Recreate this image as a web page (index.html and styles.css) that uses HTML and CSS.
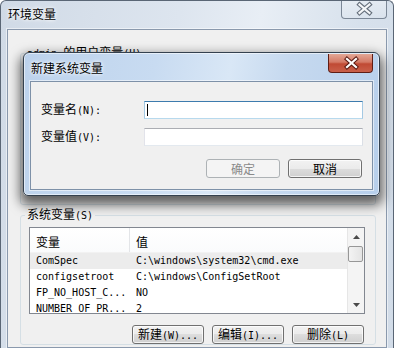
FILE: index.html
```html
<!DOCTYPE html>
<html>
<head>
	<meta charset="utf-8">
	<title>环境变量</title>
	<link rel="stylesheet" href="styles.css">
</head>
<body>
<div class="window">
	<div class="titlebar">
		<span class="title">环境变量</span>
		<span class="close close-idle">
			<svg width="44" height="18" viewBox="0 0 44 18">
				<path d="M17.5 4.5 L27.5 13 M27.5 4.5 L17.5 13" stroke="#66707c" stroke-width="4.4" stroke-linecap="square" fill="none"/>
				<path d="M17.5 4.5 L27.5 13 M27.5 4.5 L17.5 13" stroke="#f4f6f8" stroke-width="2.2" stroke-linecap="square" fill="none"/>
			</svg>
		</span>
	</div>
	<div class="client">
		<!-- user variables: covered by the dialog -->
		<fieldset class="group group-user">
			<legend><span class="hw">admin </span>的用户变量<span class="hw">(U)</span></legend>
			<div class="listbox listbox-empty"></div>
			<div class="btnrow btnrow-empty"></div>
		</fieldset>
		<fieldset class="group group-sys">
			<legend>系统变量<span class="hw">(S)</span></legend>
			<div class="listbox">
				<div class="list-main">
					<div class="list-head"><span class="col-name">变量</span><span class="col-val">值</span></div>
					<div class="row row-sel"><span class="col-name">ComSpec</span><span class="col-val">C:\windows\system32\cmd.exe</span></div>
					<div class="row"><span class="col-name">configsetroot</span><span class="col-val">C:\windows\ConfigSetRoot</span></div>
					<div class="row"><span class="col-name">FP_NO_HOST_C...</span><span class="col-val">NO</span></div>
					<div class="row"><span class="col-name">NUMBER_OF_PR...</span><span class="col-val">2</span></div>
				</div>
				<div class="vscroll">
					<span class="sb-btn"><svg width="7" height="4" viewBox="0 0 7 4"><polygon points="0,4 3.5,0 7,4" fill="#4a4a4a"/></svg></span>
					<span class="sb-thumb"></span>
					<span class="sb-track"></span>
					<span class="sb-btn"><svg width="7" height="4" viewBox="0 0 7 4"><polygon points="0,0 7,0 3.5,4" fill="#4a4a4a"/></svg></span>
				</div>
			</div>
			<div class="btnrow">
				<button class="btn">新建<span class="hw">(W)...</span></button>
				<button class="btn">编辑<span class="hw">(I)...</span></button>
				<button class="btn">删除<span class="hw">(L)</span></button>
			</div>
		</fieldset>
	</div>

	<div class="dialog">
		<div class="dlg-titlebar">
			<span class="dlg-title">新建系统变量</span>
			<span class="close close-red">
				<svg width="45" height="19" viewBox="0 0 45 19">
					<path d="M18 5 L27 13 M27 5 L18 13" stroke="#5a1a12" stroke-width="4.2" stroke-linecap="square" fill="none"/>
					<path d="M18 5 L27 13 M27 5 L18 13" stroke="#ffffff" stroke-width="2.2" stroke-linecap="square" fill="none"/>
				</svg>
			</span>
		</div>
		<div class="dlg-client">
			<div class="form">
				<label>变量名<span class="hw">(N):</span></label>
				<div class="field field-focus"><span class="caret"></span></div>
				<label>变量值<span class="hw">(V):</span></label>
				<div class="field"></div>
			</div>
			<div class="dlg-buttons">
				<button class="btn btn-off">确定</button>
				<button class="btn btn-wide">取消</button>
			</div>
		</div>
	</div>
</div>
</body>
</html>
```

FILE: styles.css
```css
html, body{
	margin: 0;
}
body{
	font-family: "Noto Sans CJK SC", sans-serif;
	font-size: 12px;
	line-height: 16px;
	color: #000;
	background: #fff;
}
.hw{
	font-family: "DejaVu Sans Mono", monospace;
	font-size: 10px;
}

/* outer window */
.window{
	position: relative;
	width: 394px;
	height: 348px;
	box-sizing: border-box;
	border: 1px solid #5a6675;
	border-bottom: none;
	border-radius: 6px 6px 0 0;
	background: linear-gradient(100deg, #d0dae6 0%, #dde5ef 40%, #e8eef5 58%, #d7e1ec 80%, #d2dce8 100%);
	display: flex;
	flex-direction: column;
	overflow: hidden;
}
.titlebar{
	height: 28px;
	display: flex;
	justify-content: space-between;
	align-items: flex-start;
	padding-left: 7px;
}
.title{
	margin-top: 5px;
	text-shadow: 0 0 5px #fff, 0 0 3px #fff;
}
.close{
	display: block;
	box-sizing: border-box;
	border-radius: 0 0 4px 4px;
}
.close svg{
	display: block;
}
.close-idle{
	width: 46px;
	height: 19px;
	margin-top: -1px;
	margin-right: 6px;
	border: 1px solid #7b8796;
	border-top: none;
	background: linear-gradient(rgba(255,255,255,0.35), rgba(255,255,255,0.1));
}
.client{
	flex: 1;
	margin: 0 6px;
	border: 1px solid #8a99ad;
	box-shadow: 0 0 0 1px rgba(255,255,255,0.5);
	background: #f0f0f0;
}

/* group boxes */
.group{
	margin: 0 10px 0 12px;
	padding: 0;
	border: 1px solid #d5dfe5;
	border-radius: 3px;
	min-width: 0;
}
.group legend{
	margin-left: 4px;
	padding: 0 2px;
	line-height: 16px;
}
.group-user{
	margin-top: 14px;
	padding-bottom: 22px;
}
.group-sys{
	margin-top: 1px;
}

.listbox{
	display: flex;
	height: 87px;
	box-sizing: border-box;
	margin: 3px 10px 0 8px;
	border: 1px solid #828790;
	background: #fff;
	overflow: hidden;
}
.list-main{
	flex: 1;
	min-width: 0;
}
.list-head, .row{
	display: grid;
	grid-template-columns: 100px 1fr;
	white-space: nowrap;
}
.list-head{
	height: 25px;
	box-sizing: border-box;
	padding-top: 6px;
	border-bottom: 1px solid #f2f2f2;
	background: linear-gradient(#ffffff, #fafbfc);
}
.list-head .col-name{
	border-right: 1px solid #e3e5e8;
	margin-top: -6px;
	padding-top: 6px;
	height: 24px;
	box-sizing: border-box;
}
.col-name{
	padding-left: 6px;
	overflow: hidden;
}
.col-val{
	padding-left: 6px;
	overflow: hidden;
}
.row{
	height: 16px;
	font-family: "DejaVu Sans Mono", monospace;
	font-size: 10px;
	line-height: 16px;
}
.row-sel{
	background: #ececec;
}

.vscroll{
	width: 17px;
	display: flex;
	flex-direction: column;
	background: #f4f4f4;
	border-left: 1px solid #e6e6e6;
	box-sizing: border-box;
}
.sb-btn{
	height: 17px;
	display: flex;
	align-items: center;
	justify-content: center;
}
.sb-btn svg{
	display: block;
}
.sb-thumb{
	height: 16px;
	margin: 1px 1px 0 0;
	box-sizing: border-box;
	border: 1px solid #979797;
	border-radius: 2px;
	background: linear-gradient(90deg, #f3f3f3, #e4e4e4);
}
.sb-track{
	flex: 1;
}

/* buttons */
.btnrow{
	display: flex;
	justify-content: flex-end;
	gap: 8px;
	margin-top: 11px;
	padding-right: 11px;
}
.btnrow-empty{
	height: 19px;
}
.btn{
	width: 72px;
	height: 19px;
	padding: 0;
	box-sizing: border-box;
	border: 1px solid #707070;
	border-radius: 3px;
	background: linear-gradient(#f2f2f2 0%, #ebebeb 50%, #dddddd 50%, #cfcfcf 100%);
	box-shadow: inset 0 0 0 1px rgba(255,255,255,0.75);
	font-family: "Noto Sans CJK SC", sans-serif;
	font-size: 12px;
	line-height: 16px;
	color: #000;
}
.btn-wide{
	width: 74px;
}
.btn-off{
	width: 74px;
	border-color: #adb2b5;
	background: #f4f4f4;
	box-shadow: none;
	color: #8a8a8a;
}

/* new variable dialog */
.dialog{
	position: absolute;
	left: 22px;
	top: 51px;
	width: 357px;
	height: 144px;
	box-sizing: border-box;
	border: 1px solid #34414f;
	border-radius: 6px 6px 5px 5px;
	background: linear-gradient(100deg, #bcd2ec 0%, #c8dbf1 35%, #d9e7f6 55%, #c6d9ef 70%, #b7cfeb 100%);
	box-shadow: 0 6px 12px 3px rgba(0,0,0,0.6), inset 0 0 0 1px rgba(255,255,255,0.55);
	display: flex;
	flex-direction: column;
}
.dlg-titlebar{
	height: 28px;
	display: flex;
	justify-content: space-between;
	align-items: flex-start;
	padding-left: 7px;
}
.dlg-title{
	margin-top: 7px;
	text-shadow: 0 0 5px #fff, 0 0 3px #fff;
}
.close-red{
	width: 45px;
	height: 19px;
	margin-top: 1px;
	margin-right: 6px;
	border: 1px solid #5f1d14;
	border-top: none;
	background: linear-gradient(#e3a796 0%, #d47a66 45%, #c04a34 55%, #c9604a 100%);
}
.dlg-client{
	margin: 0 6px 5px;
	border: 1px solid #7e91a8;
	box-shadow: 0 0 0 1px rgba(255,255,255,0.55);
	background: #f0f0f0;
}
.form{
	display: grid;
	grid-template-columns: 103px 219px;
	row-gap: 9px;
	align-items: center;
	padding: 19px 0 0 10px;
}
.field{
	height: 18px;
	box-sizing: border-box;
	border: 1px solid;
	border-color: #abadb3 #dbdfe6 #e3e9ef #e2e3ea;
	background: #fff;
	display: flex;
	align-items: center;
}
.field-focus{
	border-color: #3d7bad #a4c9e3 #b7d9ed #a4c9e3;
}
.caret{
	width: 1px;
	height: 12px;
	margin-left: 2px;
	background: #000;
}
.dlg-buttons{
	display: flex;
	justify-content: flex-end;
	gap: 8px;
	margin-top: 13px;
	padding: 0 10px 11px 0;
}
```
